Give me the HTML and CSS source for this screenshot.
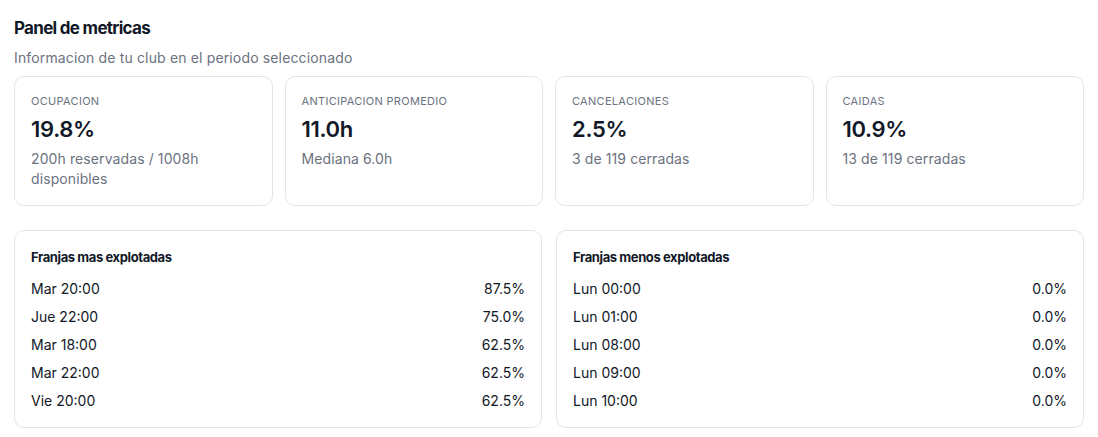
FILE: index.html
```html
<!DOCTYPE html>
<html lang="es">
<head>
    <meta charset="UTF-8">
    <meta name="viewport" content="width=device-width, initial-scale=1.0">
    <title>Panel de metricas</title>
    <link rel="stylesheet" href="styles.css">
</head>
<body>
    <div class="panel">
        <h1>Panel de metricas</h1>
        <p class="subtitle">Informacion de tu club en el periodo seleccionado</p>

        <div class="cards">
            <div class="card">
                <div class="card-label">Ocupacion</div>
                <div class="card-value">19.8%</div>
                <div class="card-sub">200h reservadas / 1008h disponibles</div>
            </div>
            <div class="card">
                <div class="card-label">Anticipacion promedio</div>
                <div class="card-value">11.0h</div>
                <div class="card-sub">Mediana 6.0h</div>
            </div>
            <div class="card">
                <div class="card-label">Cancelaciones</div>
                <div class="card-value">2.5%</div>
                <div class="card-sub">3 de 119 cerradas</div>
            </div>
            <div class="card">
                <div class="card-label">Caidas</div>
                <div class="card-value">10.9%</div>
                <div class="card-sub">13 de 119 cerradas</div>
            </div>
        </div>

        <div class="slots">
            <div class="slot-box">
                <h2>Franjas mas explotadas</h2>
                <div class="slot-row"><span>Mar 20:00</span><span>87.5%</span></div>
                <div class="slot-row"><span>Jue 22:00</span><span>75.0%</span></div>
                <div class="slot-row"><span>Mar 18:00</span><span>62.5%</span></div>
                <div class="slot-row"><span>Mar 22:00</span><span>62.5%</span></div>
                <div class="slot-row"><span>Vie 20:00</span><span>62.5%</span></div>
            </div>
            <div class="slot-box">
                <h2>Franjas menos explotadas</h2>
                <div class="slot-row"><span>Lun 00:00</span><span>0.0%</span></div>
                <div class="slot-row"><span>Lun 01:00</span><span>0.0%</span></div>
                <div class="slot-row"><span>Lun 08:00</span><span>0.0%</span></div>
                <div class="slot-row"><span>Lun 09:00</span><span>0.0%</span></div>
                <div class="slot-row"><span>Lun 10:00</span><span>0.0%</span></div>
            </div>
        </div>
    </div>
</body>
</html>
```

FILE: styles.css
```css
body {
    font-family: Inter, "Noto Sans", sans-serif;
    margin: 0;
    padding: 0;
    background-color: #ffffff;
    color: #111827;
}

.panel {
    padding: 16px 14px 10px 14px;
}

h1 {
    font-size: 17px;
    line-height: 24px;
    font-weight: 700;
    letter-spacing: -0.7px;
    margin: 0;
}

.subtitle {
    font-size: 14px;
    line-height: 20px;
    color: #6b7280;
    letter-spacing: 0.15px;
    margin: 8px 0 8px 0;
}

.cards {
    display: grid;
    grid-template-columns: repeat(4, 1fr);
    gap: 12px;
}

.card {
    border: 1px solid #e2e5e9;
    border-radius: 10px;
    padding: 16px;
}

.card-label {
    font-size: 11px;
    line-height: 16px;
    color: #6b7280;
    text-transform: uppercase;
    letter-spacing: 0.3px;
}

.card-value {
    font-size: 22px;
    line-height: 28px;
    font-weight: 600;
    margin-top: 6px;
    letter-spacing: -0.3px;
}

.card-sub {
    font-size: 14px;
    line-height: 20px;
    color: #6b7280;
    letter-spacing: 0.1px;
    margin-top: 6px;
}

.slots {
    display: grid;
    grid-template-columns: 1fr 1fr;
    gap: 14px;
    margin-top: 24px;
}

.slot-box {
    border: 1px solid #e2e5e9;
    border-radius: 10px;
    padding: 16px;
}

h2 {
    font-size: 13px;
    line-height: 20px;
    font-weight: 700;
    letter-spacing: -0.4px;
    margin: 0 0 12px 0;
}

.slot-row {
    display: flex;
    justify-content: space-between;
    font-size: 14px;
    line-height: 20px;
    margin-bottom: 8px;
}

.slot-row:last-child {
    margin-bottom: 0;
}
```
